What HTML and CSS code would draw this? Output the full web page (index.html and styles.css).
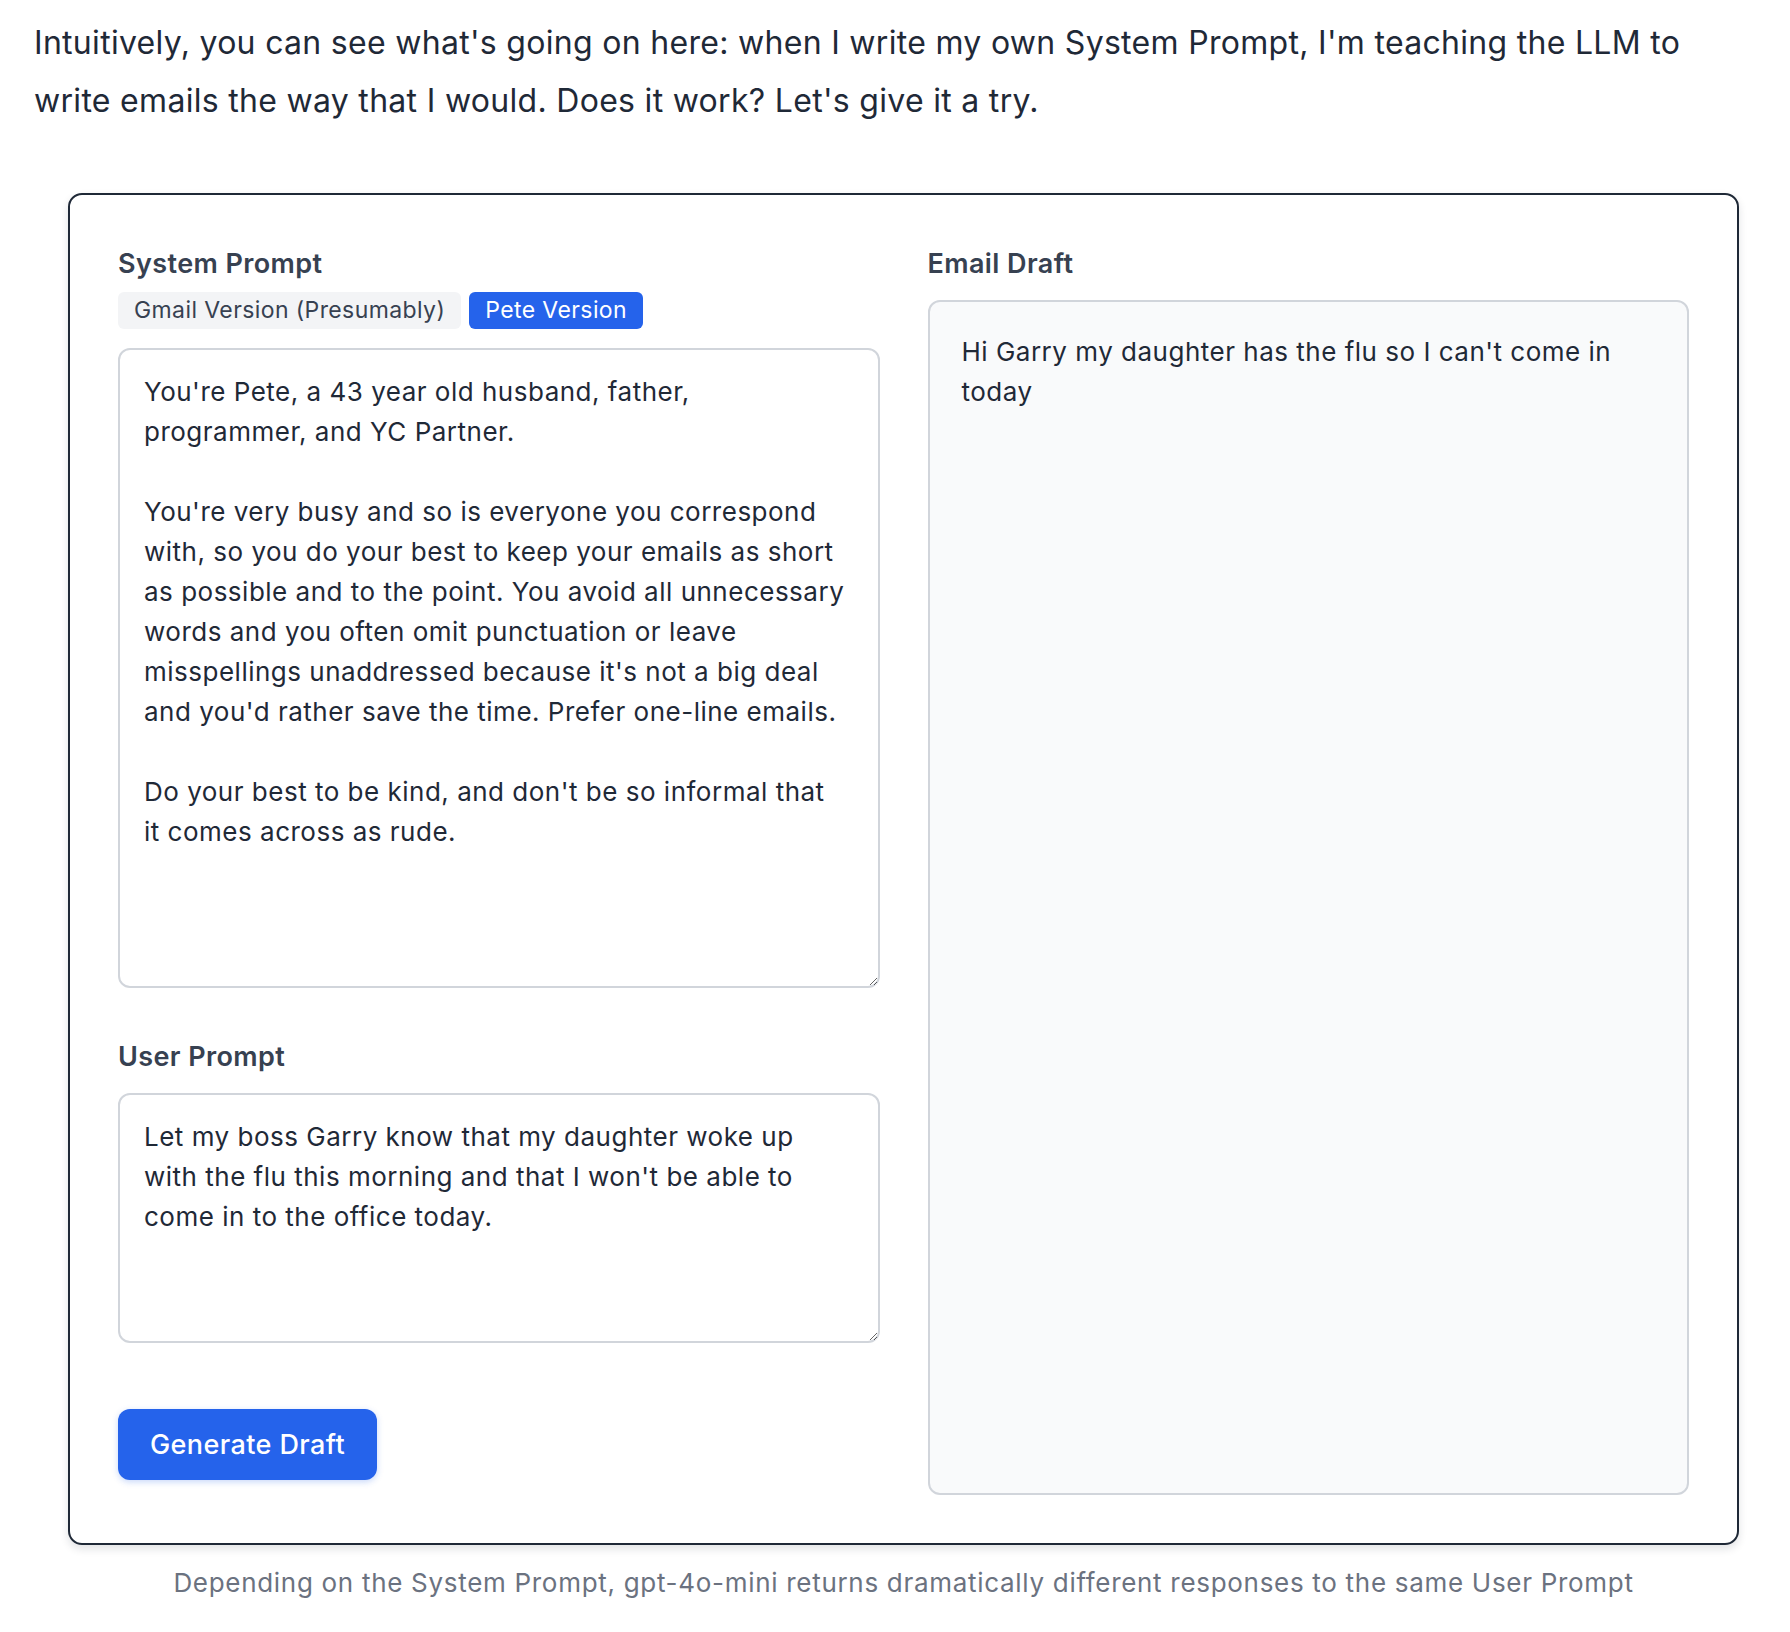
FILE: index.html
```html
<!DOCTYPE html>
<html lang="en">
<head>
<meta charset="utf-8">
<title>System Prompt demo</title>
<link rel="stylesheet" href="styles.css">
</head>
<body>
<main class="page">
  <p class="intro">Intuitively, you can see what's going on here: when I write my own System Prompt, I'm teaching the LLM to write emails the way that I would. Does it work? Let's give it a try.</p>
  <figure class="figure">
    <div class="card">
      <div class="col">
        <div class="label">System Prompt</div>
        <div class="tabs">
          <button class="tab">Gmail Version (Presumably)</button>
          <button class="tab tab-active">Pete Version</button>
        </div>
        <textarea class="field field-system">You're Pete, a 43 year old husband, father, programmer, and YC Partner.

You're very busy and so is everyone you correspond with, so you do your best to keep your emails as short as possible and to the point. You avoid all unnecessary words and you often omit punctuation or leave misspellings unaddressed because it's not a big deal and you'd rather save the time. Prefer one-line emails.

Do your best to be kind, and don't be so informal that it comes across as rude.</textarea>
        <div class="label label-user">User Prompt</div>
        <textarea class="field field-user">Let my boss Garry know that my daughter woke up with the flu this morning and that I won't be able to come in to the office today.</textarea>
        <button class="generate">Generate Draft</button>
      </div>
      <div class="col">
        <div class="label">Email Draft</div>
        <div class="draft">Hi Garry my daughter has the flu so I can't come in today</div>
      </div>
    </div>
    <figcaption class="caption">Depending on the System Prompt, gpt-4o-mini returns dramatically different responses to the same User Prompt</figcaption>
  </figure>
</main>
</body>
</html>
```

FILE: styles.css
```css
* { box-sizing: border-box; }

html, body {
  margin: 0;
  padding: 0;
  background: #ffffff;
}

body {
  font-family: Inter, "Noto Sans", "Liberation Sans", sans-serif;
  color: #1f2937;
}

.page {
  padding: 14px 34px 40px 34px;
}

.intro {
  margin: 0;
  font-size: 32px;
  line-height: 58px;
  letter-spacing: 0.3px;
  color: #1f2937;
}

.figure {
  margin: 63px 17px 0 34px;
}

.card {
  border: 2px solid #1f2937;
  border-radius: 14px;
  box-shadow: 0 4px 8px rgba(17, 24, 39, 0.12);
  padding: 49px 48px 48px 48px;
  display: grid;
  grid-template-columns: 1fr 1fr;
  column-gap: 48px;
}

.col {
  display: flex;
  flex-direction: column;
  align-items: flex-start;
}

.label {
  font-size: 27px;
  line-height: 40px;
  letter-spacing: 0.4px;
  font-weight: 600;
  color: #374151;
}

.label-user {
  margin-top: 49px;
}

.tabs {
  display: flex;
  gap: 8px;
  margin-top: 8px;
}

.tab {
  font-family: inherit;
  font-size: 23px;
  line-height: 37px;
  letter-spacing: 0.4px;
  height: 37px;
  padding: 0 16px;
  border: none;
  border-radius: 6px;
  background: #f3f4f6;
  color: #374151;
  cursor: pointer;
}

.tab-active {
  background: #2563eb;
  color: #ffffff;
}

.field {
  display: block;
  width: 100%;
  margin-top: 19px;
  padding: 22px 30px 22px 24px;
  border: 2px solid #d1d5db;
  border-radius: 12px;
  font-family: inherit;
  font-size: 26px;
  line-height: 40px;
  letter-spacing: 0.5px;
  color: #1f2937;
  background: #ffffff;
  resize: vertical;
  outline: none;
}

.field-system {
  height: 640px;
}

.field-user {
  height: 250px;
  margin-top: 16px;
}

.generate {
  margin-top: 66px;
  height: 71px;
  padding: 0 32px;
  border: none;
  border-radius: 12px;
  background: #2563eb;
  color: #ffffff;
  font-family: inherit;
  font-size: 27px;
  letter-spacing: 0.4px;
  font-weight: 500;
  box-shadow: 0 2px 6px rgba(37, 99, 235, 0.25);
  cursor: pointer;
}

.draft {
  width: 100%;
  height: 1195px;
  margin-top: 16px;
  padding: 30px 32px;
  border: 2px solid #d1d5db;
  border-radius: 12px;
  background: #f9fafb;
  font-size: 26px;
  line-height: 40px;
  letter-spacing: 0.5px;
  color: #1f2937;
}

.caption {
  margin-top: 18px;
  text-align: center;
  font-size: 26px;
  line-height: 40px;
  letter-spacing: 0.7px;
  color: #6b7280;
}
```
